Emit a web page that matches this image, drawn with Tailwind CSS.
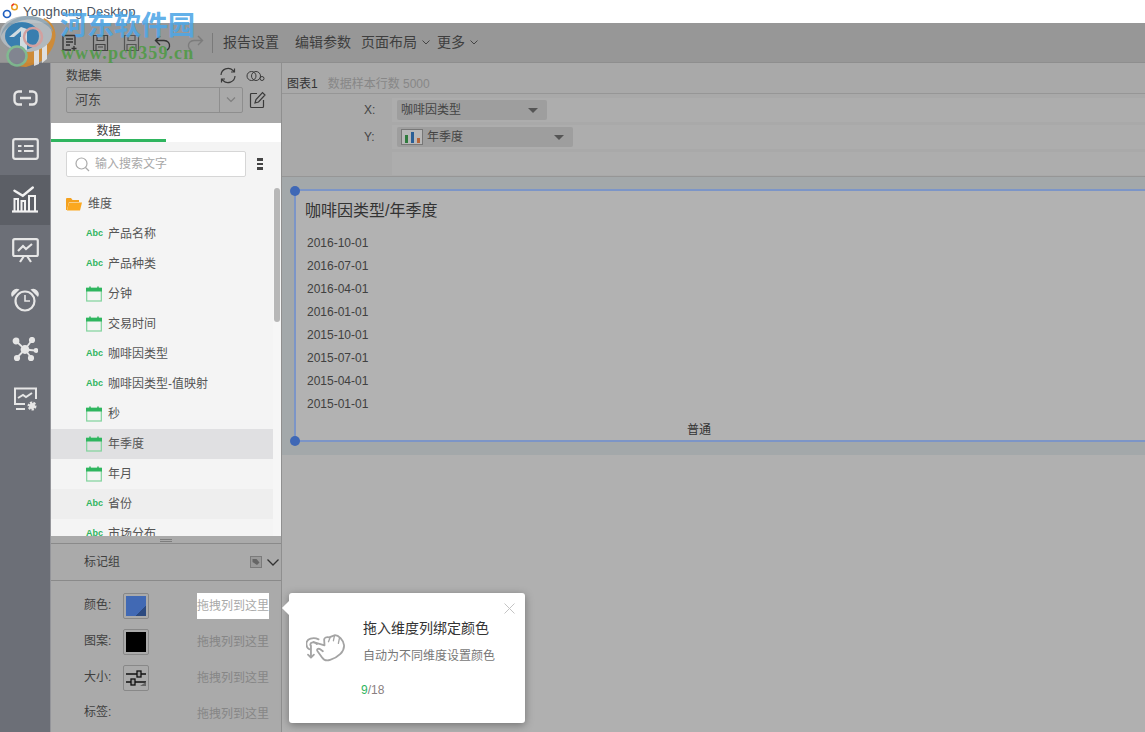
<!DOCTYPE html>
<html lang="zh"><head><meta charset="utf-8"><script src="https://cdn.jsdelivr.net/npm/@tailwindcss/browser@4"></script></head>
<body class="m-0 overflow-hidden">
<div class="relative w-[1145px] h-[732px] overflow-hidden flex flex-col bg-[#b0b0b0] text-[12px] text-[#444] font-['Liberation_Sans','Noto_Sans_CJK_SC',sans-serif]">
  <!-- title bar -->
  <div class="h-[23px] shrink-0 bg-white flex items-center pl-[23px] text-[13px] tracking-[0.2px] text-[#4a5360]">Yonghong Desktop</div>
  <!-- toolbar -->
  <div class="h-[40px] shrink-0 bg-[#979797] flex items-center pl-[61px] text-[14px] text-[#3e3e3e] border-b border-[#8e8e8e]">
    <svg class="w-[17px] h-[18px]" viewBox="0 0 17 18" fill="none" stroke="#333" stroke-width="1.300"><path d="M14 11V1.500H2V16h8M5 5h7M5 8h7M5 11h4M13 12v5M10.500 14.500h5"/></svg>
    <svg class="w-[17px] h-[18px] ml-[14px]" viewBox="0 0 17 18" fill="none" stroke="#444" stroke-width="1.200"><path d="M1.500 1.500h14v15h-14zM5 1.500v5h7v-5M4 16.500v-6h9v6M6 13h5"/></svg>
    <svg class="w-[17px] h-[18px] ml-[14px]" viewBox="0 0 17 18" fill="none" stroke="#555" stroke-width="1.200"><path d="M1.500 1.500h14v15h-14zM5 1.500v5h7v-5M4 16.500v-6h9v6M7 13.500h5"/></svg>
    <svg class="w-[18px] h-[16px] ml-[14px]" viewBox="0 0 18 16" fill="none" stroke="#333" stroke-width="1.400"><path d="M6 1 1.500 5.500 6 10M2 5.500h8c4 0 6 3 5.500 6-.3 2-1.500 3-2.500 3.500"/></svg>
    <svg class="w-[18px] h-[16px] ml-[14px]" viewBox="0 0 18 16" fill="none" stroke="#7c7c7c" stroke-width="1.400"><path d="M12 1l4.500 4.500L12 10M16 5.500H8c-4 0-6 3-5.500 6 .3 2 1.500 3 2.500 3.500"/></svg>
    <div class="w-px h-[20px] bg-[#7a7a7a] ml-[8px]"></div>
    <span class="ml-[10px]">报告设置</span>
    <span class="ml-[16px]">编辑参数</span>
    <span class="ml-[10px]">页面布局</span>
    <svg class="w-[8px] h-[5px] ml-[5px]" viewBox="0 0 8 5" fill="none" stroke="#444"><path d="M.5.5 4 4 7.500.5"/></svg>
    <span class="ml-[7px]">更多</span>
    <svg class="w-[8px] h-[5px] ml-[5px]" viewBox="0 0 8 5" fill="none" stroke="#444"><path d="M.5.5 4 4 7.500.5"/></svg>
  </div>
  <div class="flex-1 flex min-h-0">
    <!-- rail -->
    <div class="w-[51px] shrink-0 bg-[#6c6f77] border-r border-[#94959a] flex flex-col pt-[10px]">
      <div class="h-[50px] flex items-center justify-center">
        <svg class="w-[27px] h-[16px]" viewBox="0 0 27 16" fill="none" stroke="#e6e6e6" stroke-width="2.400"><path d="M10 1.500H6.500a4 4 0 0 0-4 4v5a4 4 0 0 0 4 4H10M17 1.500h3.500a4 4 0 0 1 4 4v5a4 4 0 0 1-4 4H17M8 8h11"/></svg>
      </div>
      <div class="h-[52px] flex items-center justify-center">
        <svg class="w-[27px] h-[22px]" viewBox="0 0 27 22" fill="none" stroke="#e6e6e6" stroke-width="2.200"><rect x="1.200" y="1.200" width="24.600" height="19.600" rx="2"/><path d="M6 8h3.500M6 13h3.500M12 8h9.500M12 13h9.500"/></svg>
      </div>
      <div class="h-[50px] bg-[#5c5f66] flex items-center justify-center">
        <svg class="w-[28px] h-[28px]" viewBox="0 0 28 28" fill="none" stroke="#f2f2f2" stroke-width="2.400" stroke-linecap="round"><path d="M3.500 4.700 11.800 9.700 21.800 1.500"/><path d="M3.500 25V13h3.500v12M10.500 25V15h3.500v10M18 25V10h6v15" stroke-width="2" stroke-linecap="butt"/><path d="M1 25.500h26" stroke-width="2.200" stroke-linecap="butt"/></svg>
      </div>
      <div class="h-[50px] flex items-center justify-center">
        <svg class="w-[27px] h-[25px]" viewBox="0 0 27 25" fill="none" stroke="#e6e6e6" stroke-width="2.200"><rect x="1.200" y="1.200" width="24.600" height="16.800" rx="1.500"/><path d="M6 13l5-5 3 3 6-5M8 24l4-6M19 24l-4-6"/></svg>
      </div>
      <div class="h-[50px] flex items-center justify-center">
        <svg class="w-[28px] h-[24px]" viewBox="0 0 28 24" fill="none" stroke="#e6e6e6" stroke-width="2.200"><circle cx="14" cy="13" r="9.500"/><path d="M14 7v6h5" stroke-width="1.600"/><path d="M1 9a5.500 5.500 0 0 1 7.500-7.500zM27 9a5.500 5.500 0 0 0-7.500-7.500z" fill="#e6e6e6" stroke="none"/></svg>
      </div>
      <div class="h-[49px] flex items-center justify-center">
        <svg class="w-[26px] h-[25px]" viewBox="0 0 26 25" fill="#e6e6e6" stroke="#e6e6e6" stroke-width="1.800"><path d="M4 4l9 8.500L20 3M13 12.500l-8 8M13 12.500l6 8M13 12.500l10 1" fill="none"/><circle cx="4" cy="4" r="2.500"/><circle cx="20" cy="3" r="2.200"/><circle cx="13" cy="12.500" r="3.500"/><circle cx="5" cy="21" r="2.200"/><circle cx="19" cy="21" r="2.200"/><circle cx="24" cy="13.500" r="1.500"/></svg>
      </div>
      <div class="h-[50px] flex items-center justify-center">
        <svg class="w-[25px] h-[25px]" viewBox="0 0 25 25" fill="none" stroke="#e6e6e6" stroke-width="2"><path d="M12 17H2V1.500h21V12M3 22h9M5 11l5-3 3 2 6-4"/><circle cx="19" cy="19" r="3" fill="#e6e6e6" stroke-dasharray="2 1" stroke-width="3"/></svg>
      </div>
    </div>
    <!-- side panel -->
    <div class="w-[230px] shrink-0 flex flex-col">
      <div class="h-[60px] shrink-0 bg-[#a9a9a9] px-[15px] pt-[4px] relative">
        <div class="flex items-center h-[17px] text-[12px] text-[#3e3e3e]">
          <span>数据集</span>
          <svg class="w-[18px] h-[17px] ml-auto" viewBox="0 0 18 17" fill="none" stroke="#3a3a3a" stroke-width="1.200"><path d="M2 8a7 7 0 0 1 12-4.500l1.500 1.500M16 9a7 7 0 0 1-12 4.500L2.500 12M15.500 1.500V5H12M2.500 15.500V12H6"/></svg>
          <svg class="w-[19px] h-[12px] ml-[9px] mr-[1px]" viewBox="0 0 19 12" fill="none" stroke="#3a3a3a"><circle cx="5.500" cy="6" r="4.500"/><circle cx="10" cy="6" r="4.500"/><circle cx="16" cy="8.500" r="2"/></svg>
        </div>
        <div class="flex items-center mt-[3px]">
          <div class="w-[177px] h-[26px] border border-[#8e8e8e] rounded-[2px] flex items-center pl-[8px] text-[#444] text-[13px]">
            <span class="flex-1">河东</span>
            <span class="w-[23px] h-full border-l border-[#8e8e8e] flex items-center justify-center"><svg class="w-[10px] h-[6px]" viewBox="0 0 10 6" fill="none" stroke="#7f7f7f" stroke-width="1.200"><path d="M1 .5 5 4.500 9 .5"/></svg></span>
          </div>
          <svg class="w-[17px] h-[18px] ml-[6px]" viewBox="0 0 17 18" fill="none" stroke="#3a3a3a" stroke-width="1.200"><path d="M8 2.500H2.500a1 1 0 0 0-1 1v12a1 1 0 0 0 1 1H13.500a1 1 0 0 0 1-1V9M6 12l1-3.500 6.500-7 2.500 2.500-6.500 7z"/></svg>
        </div>
      </div>
      <div class="h-[19px] shrink-0 bg-white relative">
        <div class="w-[115px] h-full border-b-[3px] border-[#2fb55f] text-center text-[12px] text-[#444] leading-[16px]">数据</div>
      </div>
      <div class="h-[394px] shrink-0 bg-[#f4f4f4] relative overflow-hidden">
        <div class="flex items-center pl-[15px] pt-[9px]">
          <div class="w-[180px] h-[26px] bg-white border border-[#d6d6d6] rounded-[2px] flex items-center pl-[8px] text-[#a8a8a8]">
            <svg class="w-[15px] h-[15px]" viewBox="0 0 15 15" fill="none" stroke="#aaa" stroke-width="1.200"><circle cx="6.500" cy="6.500" r="5.500"/><path d="M10.500 10.500 14 14"/></svg>
            <span class="ml-[5px]">输入搜索文字</span>
          </div>
          <div class="ml-[11px] w-[6px] flex flex-col gap-[2px]"><i class="block h-[2.500px] bg-[#444]"></i><i class="block h-[2.500px] bg-[#444]"></i><i class="block h-[2.500px] bg-[#444]"></i></div>
        </div>
        <div class="mt-[12px] flex flex-col text-[#555]">
          <div class="h-[30px] flex items-center pl-[15px]">
            <svg class="w-[16px] h-[14px]" viewBox="0 0 16 13"><path d="M0 1.500a1 1 0 0 1 1-1h4l1.500 2H13v2H3L1 12.500H0z" fill="#f4a11e"/><path d="M3 5h13l-2 8H1z" fill="#fba81f"/></svg>
            <span class="ml-[6px]">维度</span>
          </div>
          <div class="h-[30px] w-[222px] flex items-center pl-[35px]"><span class="w-[16px] text-[9px] font-bold text-[#2fb55f] font-['Liberation_Sans']">Abc</span><span class="ml-[6px]">产品名称</span></div>
          <div class="h-[30px] w-[222px] flex items-center pl-[35px]"><span class="w-[16px] text-[9px] font-bold text-[#2fb55f] font-['Liberation_Sans']">Abc</span><span class="ml-[6px]">产品种类</span></div>
          <div class="h-[30px] w-[222px] flex items-center pl-[35px]"><svg class="w-[16px] h-[16px]" viewBox="0 0 16 16" fill="none"><rect x=".7" y="2" width="14.600" height="13" stroke="#7fd39b" stroke-width="1.200"/><path d="M0 2h16v3.500H0z" fill="#2fb55f"/><path d="M4 .5v3M12 .5v3" stroke="#2fb55f" stroke-width="1.500"/></svg><span class="ml-[6px]">分钟</span></div>
          <div class="h-[30px] w-[222px] flex items-center pl-[35px]"><svg class="w-[16px] h-[16px]" viewBox="0 0 16 16" fill="none"><rect x=".7" y="2" width="14.600" height="13" stroke="#7fd39b" stroke-width="1.200"/><path d="M0 2h16v3.500H0z" fill="#2fb55f"/><path d="M4 .5v3M12 .5v3" stroke="#2fb55f" stroke-width="1.500"/></svg><span class="ml-[6px]">交易时间</span></div>
          <div class="h-[30px] w-[222px] flex items-center pl-[35px]"><span class="w-[16px] text-[9px] font-bold text-[#2fb55f] font-['Liberation_Sans']">Abc</span><span class="ml-[6px]">咖啡因类型</span></div>
          <div class="h-[30px] w-[222px] flex items-center pl-[35px]"><span class="w-[16px] text-[9px] font-bold text-[#2fb55f] font-['Liberation_Sans']">Abc</span><span class="ml-[6px]">咖啡因类型-值映射</span></div>
          <div class="h-[30px] w-[222px] flex items-center pl-[35px]"><svg class="w-[16px] h-[16px]" viewBox="0 0 16 16" fill="none"><rect x=".7" y="2" width="14.600" height="13" stroke="#7fd39b" stroke-width="1.200"/><path d="M0 2h16v3.500H0z" fill="#2fb55f"/><path d="M4 .5v3M12 .5v3" stroke="#2fb55f" stroke-width="1.500"/></svg><span class="ml-[6px]">秒</span></div>
          <div class="h-[30px] w-[222px] flex items-center pl-[35px] bg-[#e0e0e2]"><svg class="w-[16px] h-[16px]" viewBox="0 0 16 16" fill="none"><rect x=".7" y="2" width="14.600" height="13" stroke="#7fd39b" stroke-width="1.200"/><path d="M0 2h16v3.500H0z" fill="#2fb55f"/><path d="M4 .5v3M12 .5v3" stroke="#2fb55f" stroke-width="1.500"/></svg><span class="ml-[6px]">年季度</span></div>
          <div class="h-[30px] w-[222px] flex items-center pl-[35px]"><svg class="w-[16px] h-[16px]" viewBox="0 0 16 16" fill="none"><rect x=".7" y="2" width="14.600" height="13" stroke="#7fd39b" stroke-width="1.200"/><path d="M0 2h16v3.500H0z" fill="#2fb55f"/><path d="M4 .5v3M12 .5v3" stroke="#2fb55f" stroke-width="1.500"/></svg><span class="ml-[6px]">年月</span></div>
          <div class="h-[30px] w-[222px] flex items-center pl-[35px] bg-[#eeeeee]"><span class="w-[16px] text-[9px] font-bold text-[#2fb55f] font-['Liberation_Sans']">Abc</span><span class="ml-[6px]">省份</span></div>
          <div class="h-[30px] w-[222px] flex items-center pl-[35px]"><span class="w-[16px] text-[9px] font-bold text-[#2fb55f] font-['Liberation_Sans']">Abc</span><span class="ml-[6px]">市场分布</span></div>
        </div>
        <!-- scrollbar -->
        <div class="absolute left-[222px] top-[46px] bottom-[0px] w-[8px] bg-[#f6f6f6]"><div class="ml-[1px] w-[6px] h-[134px] rounded-[3px] bg-[#b7b7b7]"></div></div>
      </div>
      <!-- marks -->
      <div class="flex-1 bg-[#aaaaaa] flex flex-col text-[#3f3f3f]">
        <div class="h-[8px] shrink-0 border-b border-[#8a8a8a] flex flex-col items-center justify-center gap-[1px] pt-[1px]"><i class="block w-[12px] h-px bg-[#7d7d7d]"></i><i class="block w-[12px] h-px bg-[#7d7d7d]"></i></div>
        <div class="h-[37px] shrink-0 border-b border-[#8a8a8a] flex items-center pl-[33px] pr-[2px]">
          <span>标记组</span>
          <svg class="w-[12px] h-[12px] ml-auto" viewBox="0 0 12 12"><rect x=".5" y=".5" width="11" height="11" fill="#9a9a9a" stroke="#7b7b7b"/><path d="M2.500 3h4l3 3.500-2.500 2.500-4.500-3z" fill="#666"/></svg>
          <svg class="w-[12px] h-[7px] ml-[5px]" viewBox="0 0 12 7" fill="none" stroke="#333" stroke-width="1.300"><path d="M.5.500 6 6 11.500.5"/></svg>
        </div>
        <div class="flex flex-col pl-[33px] pt-[7px]">
          <div class="h-[36px] flex items-center">
            <span class="w-[39px] pb-[3px]">颜色:</span>
            <div class="w-[26px] h-[26px] border border-[#888] rounded-[2px] p-[2px] flex"><div class="flex-1 bg-[linear-gradient(135deg,#4169b4_75%,#2c4a80_75%)]"></div></div>
            <span class="ml-[48px] bg-white text-[#a9a9a9] w-[72px] h-[26px] leading-[26px]">拖拽列到这里</span>
          </div>
          <div class="h-[36px] flex items-center">
            <span class="w-[39px] pb-[3px]">图案:</span>
            <div class="w-[26px] h-[26px] border border-[#888] rounded-[2px] p-[2px] flex"><div class="flex-1 bg-black"></div></div>
            <span class="ml-[48px] text-[#868686]">拖拽列到这里</span>
          </div>
          <div class="h-[36px] flex items-center">
            <span class="w-[39px] pb-[3px]">大小:</span>
            <div class="w-[26px] h-[26px] border border-[#888] rounded-[2px] flex items-center justify-center">
              <svg class="w-[20px] h-[18px]" viewBox="0 0 20 18" fill="none" stroke="#111" stroke-width="1.300"><path d="M0 5h11M15 5h5M0 13h5M9 13h11"/><rect x="11" y="2" width="4" height="6" fill="#999"/><rect x="5" y="10" width="4" height="6" fill="#999"/><path d="M14 17l6-4v4z" fill="#666" stroke="none"/></svg>
            </div>
            <span class="ml-[48px] text-[#868686]">拖拽列到这里</span>
          </div>
          <div class="h-[36px] flex items-center">
            <span class="w-[39px] pb-[5px]">标签:</span>
            <div class="w-[26px]"></div>
            <span class="ml-[48px] text-[#868686]">拖拽列到这里</span>
          </div>
        </div>
      </div>
    </div>
    <!-- main -->
    <div class="flex-1 min-w-0 border-l border-[#8f8f8f] flex flex-col bg-[#b0b0b0]">
      <div class="h-[31px] shrink-0 bg-[#a9a9a9] border-b border-[#969696] flex items-end pl-[5px] gap-[10px] leading-[17px]">
        <span class="text-[#333]">图表1</span><span class="text-[#878787]">数据样本行数 5000</span>
      </div>
      <div class="h-[83px] shrink-0 bg-[#a9a9a9] border-b border-[#969696] pt-[4px] pl-[82px] flex flex-col gap-[3px] text-[#444]">
        <div class="flex items-center h-[24px]"><span class="w-[28px]">X:</span><div class="flex-1 h-[24px] bg-[#adadad] pl-[5px] flex items-center"><div class="w-[150px] h-[20px] bg-[#9e9e9e] rounded-[2px] flex items-center pl-[4px]"><span class="flex-1">咖啡因类型</span><svg class="w-[10px] h-[5px] mr-[9px]" viewBox="0 0 10 5"><path d="M0 0h10L5 5z" fill="#555"/></svg></div></div></div>
        <div class="flex items-center h-[24px]"><span class="w-[28px]">Y:</span><div class="flex-1 h-[24px] bg-[#adadad] pl-[5px] flex items-center"><div class="w-[176px] h-[20px] bg-[#9e9e9e] rounded-[2px] flex items-center pl-[4px]"><svg class="w-[22px] h-[16px] mr-[4px]" viewBox="0 0 22 16"><rect x=".5" y=".5" width="21" height="15" fill="#b8b8b8" stroke="#777"/><rect x="4" y="6" width="3" height="8" fill="#2f7a3d"/><rect x="10" y="3" width="3" height="11" fill="#2a5f96"/><rect x="16" y="9" width="3" height="5" fill="#b5653a"/></svg><span class="flex-1">年季度</span><svg class="w-[10px] h-[5px] mr-[9px]" viewBox="0 0 10 5"><path d="M0 0h10L5 5z" fill="#555"/></svg></div></div></div>
        <div class="flex items-center h-[23px] pl-[28px]"><div class="flex-1 h-[23px] bg-[#adadad]"></div></div>
      </div>
      <div class="h-[278px] shrink-0 bg-[#a3a8aa] pl-[12px] pt-[12px] flex">
        <div class="relative flex-1 h-[253px] bg-[#b2b2b2] border-2 border-r-0 border-[#7c95c7]">
          <i class="absolute -left-[6px] -top-[5px] w-[10px] h-[10px] rounded-full bg-[#3f68b6]"></i>
          <i class="absolute -left-[6px] -bottom-[6px] w-[10px] h-[10px] rounded-full bg-[#3f68b6]"></i>
          <div class="text-[16px] text-[#333] pl-[9px] pt-[10px] leading-[20px]">咖啡因类型/年季度</div>
          <div class="pl-[11px] mt-[11px] flex flex-col text-[#404040] leading-[23px]">
            <span>2016-10-01</span><span>2016-07-01</span><span>2016-04-01</span><span>2016-01-01</span><span>2015-10-01</span><span>2015-07-01</span><span>2015-04-01</span><span>2015-01-01</span>
          </div>
          <div class="absolute left-[391px] top-[230px] text-[#333]">普通</div>
        </div>
      </div>
    </div>
  </div>
  <!-- guide popover -->
  <div class="absolute left-[289px] top-[593px] w-[236px] h-[130px] bg-white rounded-[3px] shadow-[0_2px_8px_rgba(0,0,0,0.35)]">
    <i class="absolute -left-[5px] top-[10px] w-[10px] h-[10px] rotate-45 bg-white"></i>
    <svg class="absolute right-[10px] top-[10px] w-[11px] h-[11px]" viewBox="0 0 11 11" fill="none" stroke="#c4c4c4"><path d="M.5.5l10 10M10.500.5l-10 10"/></svg>
    <svg class="absolute left-[17px] top-[41px] w-[39px] h-[28px]" viewBox="77 162 118 84" fill="none" stroke="#a4a4a4" stroke-width="5.500" stroke-linejoin="round" stroke-linecap="round"><path d="M115 178C100 170 78 175 78 192 78 200 82 205 87 208M110 192C102 184 90 186 90 195"/><path d="M92 197V232M83 224 92 233 101 224"/><path d="M100 186 133 196 132 180C131 172 140 170 147 172L165 165C175 165 190 180 192 195 194 215 175 232 150 240 138 244 130 240 125 232L112 214C108 208 114 204 120 208L128 214"/><path d="M145 185 150 172M160 182 163 167M175 190 178 175" stroke-width="4"/></svg>
    <div class="absolute left-[74px] top-[27px] text-[14px] text-[#333] leading-[17px]">拖入维度列绑定颜色</div>
    <div class="absolute left-[74px] top-[55px] text-[#777] leading-[16px]">自动为不同维度设置颜色</div>
    <div class="absolute left-[72px] top-[89px] leading-[16px] text-[#8a7f7f]"><span class="text-[#2fb55f]">9</span>/18</div>
  </div>
  <!-- app icon + watermark -->
  <svg class="absolute left-[2px] top-[3px] w-[17px] h-[16px]" viewBox="0 0 17 16" fill="none"><circle cx="12.500" cy="4" r="2.800" stroke="#e8a020" stroke-width="1.500"/><path d="M10 3a3 3 0 0 1 2-2" stroke="#e33" stroke-width="1.500"/><circle cx="5" cy="11" r="3.500" stroke="#1f5fc0" stroke-width="1.700"/></svg>
  <svg class="absolute left-[0px] top-[12px] w-[58px] h-[56px] opacity-90" viewBox="0 0 58 56" fill="none">
    <path d="M44 6c9 4 13 13 11 22-2 10-9 19-17 23l-12 4c-8 0-14-3-18-8l30-25z" fill="#d48a2e"/>
    <path d="M34 32h5v20l-5 2zM42 30h5v17l-5 4z" fill="#e6e6e6"/>
    <ellipse cx="26" cy="22" rx="26" ry="18" fill="#b4bcc2"/>
    <path d="M1 24C3 10 18 3 32 4 44 5 52 12 53 20 46 9 32 5 20 9 10 12 4 18 1 24z" fill="#8aa1b0"/>
    <ellipse cx="22" cy="24" rx="17" ry="14" fill="#2e7cb2"/>
    <path d="M9 25l12-10 6 2v21h-7V25z" fill="#d8e3ea"/>
    <path d="M14 25l7-6v6z" fill="#2e7cb2"/>
    <circle cx="33" cy="25" r="9" stroke="#d9a2a0" stroke-width="2.500"/>
    <circle cx="17" cy="44" r="9.500" fill="#7f8490" stroke="#7fbd90" stroke-width="2.500"/>
  </svg>
  <div class="absolute left-[60px] top-[7px] text-[27px] leading-[34px] font-bold text-[#4ea6e6]/90 font-['Noto_Sans_CJK_SC',sans-serif]">河东软件园</div>
  <div class="absolute left-[61px] top-[42px] text-[18px] leading-[22px] font-bold tracking-[1.100px] text-[#4f9a45]/90 font-['Liberation_Serif',serif]">www.pc0359.cn</div>
</div>
</body></html>
